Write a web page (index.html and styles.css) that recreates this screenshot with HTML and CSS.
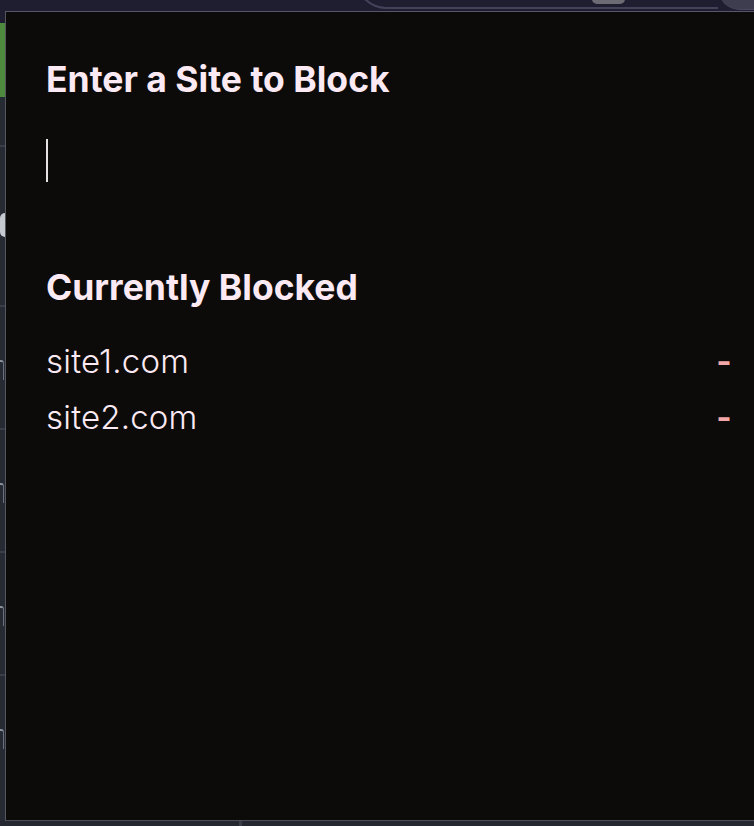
FILE: index.html
```html
<!DOCTYPE html>
<html>
    <head>
        <title>Site Blocker</title>
        <link rel="stylesheet" href="styles.css">
    </head>
    <body>
        <div class="topbar">
            <div class="tab"><div class="chip"></div></div>
            <div class="knob"></div>
        </div>
        <div class="middle">
            <div class="sidebar">
                <div class="green"></div>
                <div class="tick first"></div>
                <div class="half"></div>
                <div class="tick second"></div>
                <div class="hook"></div>
                <div class="tick"></div>
                <div class="hook"></div>
                <div class="tick"></div>
                <div class="hook"></div>
                <div class="tick"></div>
                <div class="hook"></div>
            </div>
            <div class="popup">
                <h1>Enter a Site to Block</h1>
                <div class="entry"><span class="caret"></span></div>

                <h1 class="second">Currently Blocked</h1>
                <ul class="sites">
                    <li><span>site1.com</span><span class="remove">-</span></li>
                    <li><span>site2.com</span><span class="remove">-</span></li>
                </ul>
            </div>
        </div>
        <div class="bottombar">
            <div class="split"></div>
        </div>
    </body>
</html>
```

FILE: styles.css
```css
html, body {
    margin: 0;
    height: 100%;
}

body {
    display: flex;
    flex-direction: column;
    background: #252930;
    font-family: Inter, "Noto Sans", sans-serif;
    overflow: hidden;
}

/* browser strip above the popup */
.topbar {
    height: 11px;
    background: #1f1d30;
    display: flex;
    flex-shrink: 0;
    overflow: hidden;
}

.tab {
    box-sizing: border-box;
    width: 362px;
    height: 31px;
    margin-top: -22px;
    margin-left: 356px;
    border-left: 2px solid #44425a;
    border-bottom: 2px solid #44425a;
    border-bottom-left-radius: 30px;
    display: flex;
    align-items: flex-end;
}

.chip {
    width: 33px;
    height: 26px;
    margin-left: 234px;
    margin-bottom: 3px;
    background: #6c6b74;
    border-radius: 0 0 5px 5px;
}

.knob {
    flex: 1;
    height: 31px;
    margin-top: -22px;
    background: #3e3d50;
    border-bottom: 1px solid #4a4960;
    border-bottom-left-radius: 22px;
}

.middle {
    flex: 1;
    display: flex;
    min-height: 0;
}

/* sliver of the page behind */
.sidebar {
    width: 5px;
    flex-shrink: 0;
    background: #262a33;
    display: flex;
    flex-direction: column;
    overflow: hidden;
}

.sidebar div {
    flex-shrink: 0;
}

.green {
    height: 74px;
    background: #4d8a3d;
    border-top: 12px solid #1f1d30;
}

.tick {
    height: 2px;
    margin-top: 48px;
    background: #3a3e48;
}

.tick.second {
    margin-top: 68px;
}

.half {
    margin-top: 66px;
    width: 5px;
    height: 24px;
    background: #c5c9d0;
    border-radius: 12px 0 0 12px;
}

.hook {
    margin-top: 53px;
    width: 4px;
    height: 20px;
    border-top: 2px solid #8a929c;
    border-right: 1px solid #6a717b;
    border-top-right-radius: 3px;
    box-sizing: border-box;
}

.popup {
    flex: 1;
    background: #0c0b0a;
    border-top: 1px solid #575569;
    border-left: 1px solid #55575f;
    border-bottom: 1px solid #4c4e57;
    padding: 0 22px 0 40px;
    color: #fbe9f3;
}

h1 {
    margin: 0;
    padding-top: 49px;
    font-size: 35.5px;
    font-weight: 700;
    line-height: 38px;
    letter-spacing: 0;
}

h1.second {
    padding-top: 87px;
}

.entry {
    margin-top: 40px;
    height: 43px;
}

.caret {
    display: block;
    width: 2px;
    height: 43px;
    background: #e6e2e4;
}

.sites {
    list-style: none;
    margin: 26px 0 0 0;
    padding: 0;
}

.sites li {
    display: flex;
    justify-content: space-between;
    align-items: center;
    font-size: 33px;
    font-weight: 300;
    line-height: 56px;
    letter-spacing: 0.2px;
}

.remove {
    color: #f2a8a8;
    font-weight: 700;
}

.bottombar {
    height: 5px;
    flex-shrink: 0;
    background: #252830;
    display: flex;
}

.split {
    width: 3px;
    margin-left: 239px;
    background: #3b3e48;
}
```
